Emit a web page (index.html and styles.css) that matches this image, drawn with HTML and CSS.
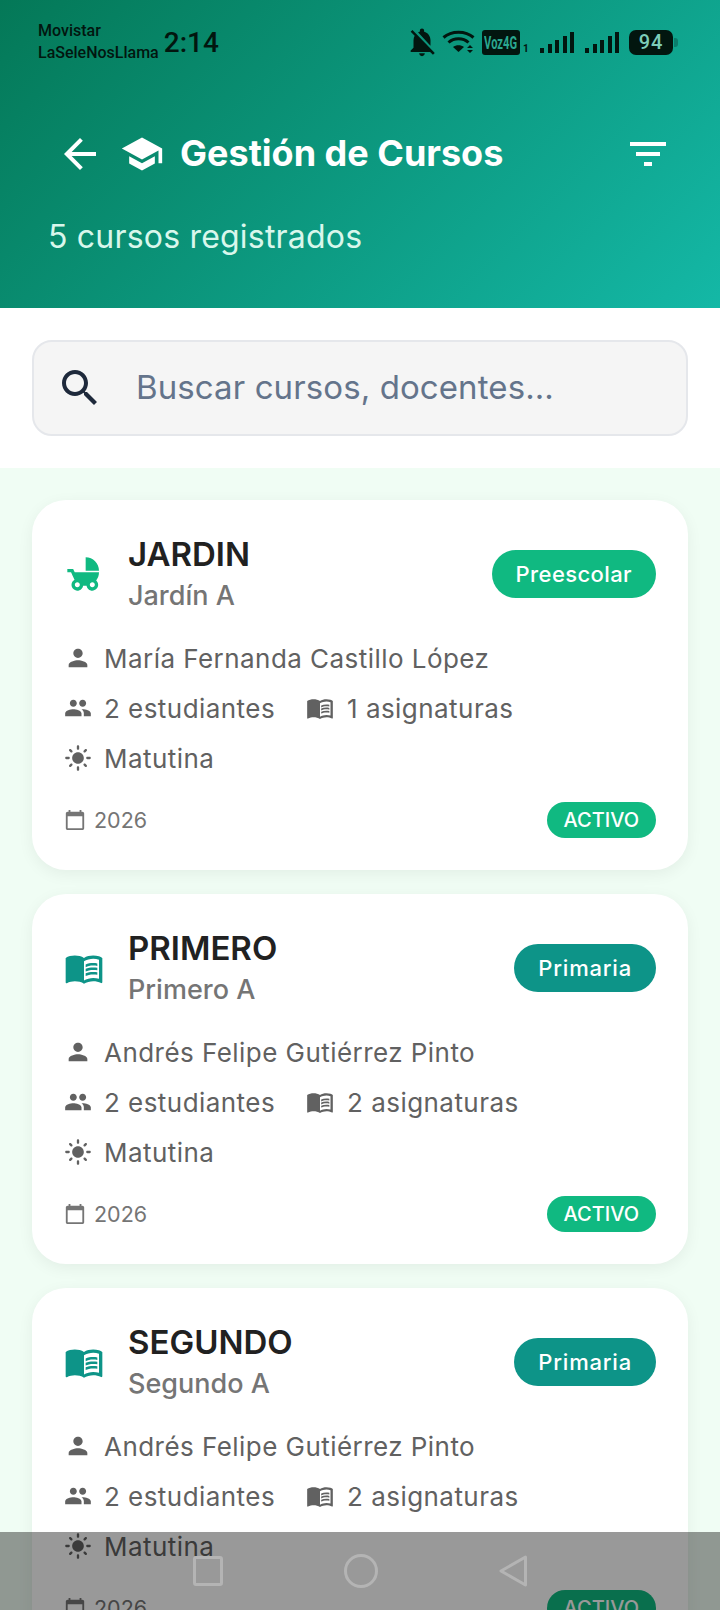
FILE: index.html
```html
<!DOCTYPE html>
<html lang="es">
<head>
  <meta charset="UTF-8" />
  <meta name="viewport" content="width=device-width, initial-scale=1" />
  <title>Gestión de Cursos</title>
  <link rel="stylesheet" href="styles.css">
</head>
<body>
  <svg class="sprite" width="0" height="0">
    <symbol id="i-back" viewBox="0 0 24 24"><path d="M20 11H7.83l5.59-5.59L12 4l-8 8 8 8 1.41-1.41L7.83 13H20v-2z"/></symbol>
    <symbol id="i-school" viewBox="0 0 24 24"><path d="M5 13.18v4L12 21l7-3.82v-4L12 17l-7-3.82zM12 3L1 9l11 6 9-4.91V17h2V9L12 3z"/></symbol>
    <symbol id="i-filter" viewBox="0 0 24 24"><path d="M10 18h4v-2h-4v2zM3 6v2h18V6H3zm3 7h12v-2H6v2z"/></symbol>
    <symbol id="i-search" viewBox="0 0 24 24"><path d="M15.5 14h-.79l-.28-.27C15.41 12.59 16 11.11 16 9.5 16 5.91 13.09 3 9.5 3S3 5.91 3 9.5 5.91 16 9.5 16c1.61 0 3.09-.59 4.23-1.57l.27.28v.79l5 4.99L20.49 19l-4.99-5zm-6 0C7.01 14 5 11.99 5 9.5S7.01 5 9.5 5 14 7.01 14 9.5 11.99 14 9.5 14z"/></symbol>
    <symbol id="i-stroller" viewBox="0 0 24 24"><path d="M13 2v8h8c0-4.42-3.58-8-8-8zm6.32 13.89C20.37 14.54 21 12.84 21 11H6.44l-.95-2H2v2h2.22s1.89 4.07 2.12 4.42c-1.1.59-1.84 1.75-1.84 3.08C4.5 20.43 6.07 22 8 22c1.76 0 3.22-1.3 3.46-3h2.08c.24 1.7 1.7 3 3.46 3 1.93 0 3.5-1.57 3.5-3.5 0-1.04-.46-1.97-1.18-2.61zM8 20c-.83 0-1.5-.67-1.5-1.5S7.17 17 8 17s1.5.67 1.5 1.5S8.83 20 8 20zm9 0c-.83 0-1.5-.67-1.5-1.5S16.17 17 17 17s1.5.67 1.5 1.5S17.83 20 17 20z"/></symbol>
    <symbol id="i-book" viewBox="0 0 24 24"><path d="M21 5c-1.11-.35-2.33-.5-3.5-.5-1.95 0-4.05.4-5.5 1.5-1.45-1.1-3.55-1.5-5.5-1.5S2.45 4.9 1 6v14.65c0 .25.25.5.5.5.1 0 .15-.05.25-.05C3.1 20.45 5.05 20 6.5 20c1.95 0 4.05.4 5.5 1.5 1.35-.85 3.8-1.5 5.5-1.5 1.65 0 3.35.3 4.75 1.05.1.05.15.05.25.05.25 0 .5-.25.5-.5V6c-.6-.45-1.25-.75-2-1zm0 13.5c-1.1-.35-2.3-.5-3.5-.5-1.7 0-4.15.65-5.5 1.5V8c1.35-.85 3.8-1.5 5.5-1.5 1.2 0 2.4.15 3.5.5v11.5z"/><path d="M17.5 10.5c.88 0 1.73.09 2.5.26V9.24c-.79-.15-1.64-.24-2.5-.24-1.7 0-3.24.29-4.5.83v1.66c1.13-.64 2.7-.99 4.5-.99zM13 12.49v1.66c1.13-.64 2.7-.99 4.5-.99.88 0 1.73.09 2.5.26V11.9c-.79-.15-1.64-.24-2.5-.24-1.7 0-3.24.3-4.5.83zM17.5 14.33c-1.7 0-3.24.29-4.5.83v1.66c1.13-.64 2.7-.99 4.5-.99.88 0 1.73.09 2.5.26v-1.52c-.79-.16-1.64-.24-2.5-.24z"/></symbol>
    <symbol id="i-person" viewBox="0 0 24 24"><path d="M12 12c2.21 0 4-1.79 4-4s-1.79-4-4-4-4 1.79-4 4 1.79 4 4 4zm0 2c-2.67 0-8 1.34-8 4v2h16v-2c0-2.66-5.33-4-8-4z"/></symbol>
    <symbol id="i-people" viewBox="0 0 24 24"><path d="M16 11c1.66 0 2.99-1.34 2.99-3S17.66 5 16 5c-1.66 0-3 1.34-3 3s1.34 3 3 3zm-8 0c1.66 0 2.99-1.34 2.99-3S9.66 5 8 5C6.34 5 5 6.34 5 8s1.34 3 3 3zm0 2c-2.33 0-7 1.17-7 3.5V19h14v-2.5c0-2.33-4.67-3.5-7-3.5zm8 0c-.29 0-.62.02-.97.05 1.16.84 1.97 1.97 1.97 3.45V19h6v-2.5c0-2.33-4.67-3.5-7-3.5z"/></symbol>
    <symbol id="i-sun" viewBox="0 0 24 24"><path d="M12 7c-2.76 0-5 2.24-5 5s2.24 5 5 5 5-2.24 5-5-2.24-5-5-5zM2 13h2c.55 0 1-.45 1-1s-.45-1-1-1H2c-.55 0-1 .45-1 1s.45 1 1 1zm18 0h2c.55 0 1-.45 1-1s-.45-1-1-1h-2c-.55 0-1 .45-1 1s.45 1 1 1zM11 2v2c0 .55.45 1 1 1s1-.45 1-1V2c0-.55-.45-1-1-1s-1 .45-1 1zm0 18v2c0 .55.45 1 1 1s1-.45 1-1v-2c0-.55-.45-1-1-1s-1 .45-1 1zM5.99 4.58c-.39-.39-1.03-.39-1.41 0-.39.39-.39 1.03 0 1.41l1.06 1.06c.39.39 1.03.39 1.41 0s.39-1.03 0-1.41L5.99 4.58zm12.37 12.37c-.39-.39-1.03-.39-1.41 0-.39.39-.39 1.03 0 1.41l1.06 1.06c.39.39 1.03.39 1.41 0 .39-.39.39-1.03 0-1.41l-1.06-1.06zm1.06-10.96c.39-.39.39-1.03 0-1.41-.39-.39-1.03-.39-1.41 0l-1.06 1.06c-.39.39-.39 1.03 0 1.41s1.03.39 1.41 0l1.06-1.06zM7.05 18.36c.39-.39.39-1.03 0-1.41-.39-.39-1.03-.39-1.41 0l-1.06 1.06c-.39.39-.39 1.03 0 1.41s1.03.39 1.41 0l1.06-1.06z"/></symbol>
    <symbol id="i-calendar" viewBox="0 0 24 24"><path d="M20 3h-1V1h-2v2H7V1H5v2H4c-1.1 0-2 .9-2 2v16c0 1.1.9 2 2 2h16c1.1 0 2-.9 2-2V5c0-1.1-.9-2-2-2zm0 18H4V8h16v13z"/></symbol>
    <symbol id="i-bell-off" viewBox="0 0 24 24"><path d="M20 18.69L7.84 6.14 5.27 3.49 4 4.76l2.8 2.8v.01c-.52.99-.8 2.16-.8 3.42v5l-2 2v1h13.73l2 2L21 19.72l-1-1.03zM12 22c1.11 0 2-.89 2-2h-4c0 1.11.89 2 2 2zm6-7.32V11c0-3.08-1.64-5.64-4.5-6.32V4c0-.83-.67-1.5-1.5-1.5s-1.5.67-1.5 1.5v.68c-.15.03-.29.08-.42.12-.1.03-.2.07-.3.11h-.01c-.2.08-.4.17-.59.27-.01 0-.01 0-.02.01L18 14.68z"/></symbol>
  </svg>

  <div class="screen">
    <header class="header">
      <div class="status-bar">
        <div class="carrier">Movistar<br>LaSeleNosLlama</div>
        <div class="clock">2:14</div>
        <div class="status-icons">
          <svg class="st-bell"><use href="#i-bell-off"/></svg>
          <svg class="st-wifi" viewBox="0 0 33 25">
            <path d="M1.5 7.5C9.5 .5 23.5 .5 31.5 7.5" fill="none" stroke="#02160f" stroke-width="3"/>
            <path d="M6.5 12.5C12 7.5 21 7.5 26.500 12.500" fill="none" stroke="#02160f" stroke-width="3"/>
            <path d="M11 17C14 14.500 19 14.500 22 17L16.500 22z"/>
            <path d="M25 18l3-3 3 3zM25 20l3 3 3-3z"/>
          </svg>
          <span class="chip-voz"><span>Voz4G</span></span>
          <span class="sim-num">1</span>
          <div class="signal"><i></i><i></i><i></i><i></i><i></i></div>
          <div class="signal"><i></i><i></i><i></i><i></i><i></i></div>
          <span class="battery">94</span>
          <span class="battery-nub"></span>
        </div>
      </div>
      <div class="toolbar">
        <svg class="ic-48"><use href="#i-back"/></svg>
        <svg class="ic-school"><use href="#i-school"/></svg>
        <h1>Gestión de Cursos</h1>
        <svg class="ic-48 ic-filter"><use href="#i-filter"/></svg>
      </div>
      <p class="subtitle">5 cursos registrados</p>
    </header>

    <section class="search-section">
      <div class="search-box">
        <svg class="ic-search"><use href="#i-search"/></svg>
        <span class="placeholder">Buscar cursos, docentes...</span>
      </div>
    </section>

    <main class="list">
      <article class="card">
        <div class="card-top">
          <svg class="ic-level green"><use href="#i-stroller"/></svg>
          <div class="names">
            <h2>JARDIN</h2>
            <div class="group">Jardín A</div>
          </div>
          <span class="pill pill-green">Preescolar</span>
        </div>
        <div class="row"><svg class="ic-28"><use href="#i-person"/></svg><span>María Fernanda Castillo López</span></div>
        <div class="row"><svg class="ic-28"><use href="#i-people"/></svg><span>2 estudiantes</span><svg class="ic-28 second"><use href="#i-book"/></svg><span>1 asignaturas</span></div>
        <div class="row"><svg class="ic-28"><use href="#i-sun"/></svg><span>Matutina</span></div>
        <div class="card-foot">
          <svg class="ic-22"><use href="#i-calendar"/></svg>
          <span class="year">2026</span>
          <span class="state">ACTIVO</span>
        </div>
      </article>

      <article class="card">
        <div class="card-top">
          <svg class="ic-level teal"><use href="#i-book"/></svg>
          <div class="names">
            <h2>PRIMERO</h2>
            <div class="group">Primero A</div>
          </div>
          <span class="pill pill-teal">Primaria</span>
        </div>
        <div class="row"><svg class="ic-28"><use href="#i-person"/></svg><span>Andrés Felipe Gutiérrez Pinto</span></div>
        <div class="row"><svg class="ic-28"><use href="#i-people"/></svg><span>2 estudiantes</span><svg class="ic-28 second"><use href="#i-book"/></svg><span>2 asignaturas</span></div>
        <div class="row"><svg class="ic-28"><use href="#i-sun"/></svg><span>Matutina</span></div>
        <div class="card-foot">
          <svg class="ic-22"><use href="#i-calendar"/></svg>
          <span class="year">2026</span>
          <span class="state">ACTIVO</span>
        </div>
      </article>

      <article class="card">
        <div class="card-top">
          <svg class="ic-level teal"><use href="#i-book"/></svg>
          <div class="names">
            <h2>SEGUNDO</h2>
            <div class="group">Segundo A</div>
          </div>
          <span class="pill pill-teal">Primaria</span>
        </div>
        <div class="row"><svg class="ic-28"><use href="#i-person"/></svg><span>Andrés Felipe Gutiérrez Pinto</span></div>
        <div class="row"><svg class="ic-28"><use href="#i-people"/></svg><span>2 estudiantes</span><svg class="ic-28 second"><use href="#i-book"/></svg><span>2 asignaturas</span></div>
        <div class="row"><svg class="ic-28"><use href="#i-sun"/></svg><span>Matutina</span></div>
        <div class="card-foot">
          <svg class="ic-22"><use href="#i-calendar"/></svg>
          <span class="year">2026</span>
          <span class="state">ACTIVO</span>
        </div>
      </article>
    </main>

    <div class="nav-bar">
      <span class="nav-square"></span>
      <span class="nav-circle"></span>
      <svg class="nav-back" viewBox="0 0 28 32"><path d="M26.500 2L2 16l24.500 14z" fill="none" stroke="#b4b4b4" stroke-width="3" stroke-linejoin="round"/></svg>
    </div>
  </div>
</body>
</html>
```

FILE: styles.css
```css
:root {
  --green: #10b981;
  --teal: #0d9488;
  --text-dark: #212121;
  --text-mid: #616161;
  --text-soft: #757575;
  --status: #02160f;
}
* {
  box-sizing: border-box;
}
html, body {
  margin: 0;
  height: 1610px;
  overflow: hidden;
}
body {
  font-family: "Inter", "Noto Sans", sans-serif;
  background: #f0fdf4;
}
svg {
  fill: currentColor;
  flex: none;
}
.sprite {
  position: absolute;
}
.screen {
  position: relative;
  height: 1610px;
  overflow: hidden;
}

/* header */
.header {
  height: 308px;
  background: linear-gradient(135deg, #047857, #14b8a6);
  color: #fff;
}
.status-bar {
  height: 84px;
  display: flex;
  align-items: center;
  padding: 0 42px 0 38px;
  color: var(--status);
  font-family: "Roboto", sans-serif;
}
.carrier {
  font-size: 16px;
  font-weight: 500;
  line-height: 22px;
}
.clock {
  font-size: 28px;
  font-weight: 500;
  margin-left: 5px;
}
.status-icons {
  margin-left: auto;
  display: flex;
  align-items: center;
}
.st-bell {
  width: 34px;
  height: 34px;
}
.st-wifi {
  width: 33px;
  height: 25px;
  margin-left: 3px;
}
.chip-voz {
  width: 38px;
  height: 25px;
  margin-left: 7px;
  border-radius: 3px;
  background: var(--status);
  color: #2aa890;
  font-size: 18px;
  font-weight: 700;
  line-height: 25px;
  text-align: center;
  overflow: hidden;
}
.chip-voz span {
  display: inline-block;
  margin: 0 -10px;
  transform: scaleX(0.62);
}
.sim-num {
  width: 5px;
  margin: 12px 0 0 3px;
  font-size: 10px;
  font-weight: 700;
}
.signal {
  display: flex;
  align-items: flex-end;
  gap: 3.5px;
  height: 21px;
  margin-left: 12px;
}
.signal + .signal {
  margin-left: 11px;
}
.signal i {
  width: 4px;
  background: var(--status);
}
.signal i:nth-child(1) { height: 5px; }
.signal i:nth-child(2) { height: 9px; }
.signal i:nth-child(3) { height: 13px; }
.signal i:nth-child(4) { height: 17px; }
.signal i:nth-child(5) { height: 21px; }
.battery {
  width: 44px;
  height: 25px;
  margin-left: 10px;
  border-radius: 7px;
  background: var(--status);
  color: #7ccdb9;
  font-size: 20px;
  font-weight: 500;
  line-height: 25px;
  text-align: center;
  letter-spacing: 1px;
}
.battery-nub {
  width: 4px;
  height: 9px;
  margin-left: 1px;
  border-radius: 0 3px 3px 0;
  background: #0b7d6c;
}
.toolbar {
  height: 48px;
  margin-top: 46px;
  padding-left: 56px;
  display: flex;
  align-items: center;
}
.ic-48 {
  width: 48px;
  height: 48px;
}
.ic-school {
  width: 44px;
  height: 44px;
  margin-left: 16px;
}
.ic-filter {
  margin-left: auto;
  margin-right: 48px;
}
h1 {
  margin: 0 0 0 16px;
  font-size: 36px;
  font-weight: 700;
  line-height: 46px;
  padding-bottom: 2px;
}
.subtitle {
  margin: 39px 0 0 48px;
  color: #d9f7ec;
  font-size: 32px;
  line-height: 40px;
  letter-spacing: 0.2px;
}

/* search */
.search-section {
  height: 160px;
  padding: 32px;
  background: #fff;
}
.search-box {
  height: 96px;
  padding-left: 22px;
  display: flex;
  align-items: center;
  gap: 32px;
  background: #f5f5f5;
  border: 2px solid #e5e7eb;
  border-radius: 20px;
}
.ic-search {
  width: 48px;
  height: 48px;
  color: #1e293b;
}
.placeholder {
  padding-bottom: 3px;
  color: #64748b;
  font-size: 33px;
  letter-spacing: 0.1px;
}

/* cards */
.list {
  padding: 32px;
  display: flex;
  flex-direction: column;
  gap: 24px;
}
.card {
  height: 370px;
  padding: 32px;
  background: #fff;
  border-radius: 34px;
  box-shadow: 0 4px 16px rgba(0, 0, 0, 0.06);
}
.card-top {
  display: flex;
  align-items: center;
  margin-bottom: 16px;
}
.ic-level {
  width: 40px;
  height: 40px;
  margin-bottom: 1px;
}
.green { color: var(--green); }
.teal { color: var(--teal); }
.names {
  margin-left: 24px;
  padding-top: 2px;
}
h2 {
  margin: 0;
  color: var(--text-dark);
  font-size: 33px;
  font-weight: 600;
  line-height: 41px;
}
.group {
  color: var(--text-soft);
  font-size: 27px;
  font-weight: 500;
  line-height: 42px;
}
.pill {
  margin: 0 0 1px auto;
  height: 48px;
  padding: 0 24px;
  border-radius: 24px;
  color: #fff;
  font-size: 22px;
  font-weight: 500;
  line-height: 48px;
  letter-spacing: 0.4px;
}
.pill-green { background: var(--green); }
.pill-teal {
  background: var(--teal);
  letter-spacing: 0.8px;
}
.row {
  height: 50px;
  display: flex;
  align-items: center;
  color: var(--text-mid);
  font-size: 26px;
  letter-spacing: 0.45px;
}
.ic-28 {
  width: 28px;
  height: 28px;
  margin-right: 12px;
}
.second {
  margin-left: 31px;
  margin-right: 13px;
}
.card-foot {
  display: flex;
  align-items: center;
  margin-top: 19px;
  color: var(--text-soft);
}
.ic-22 {
  width: 22px;
  height: 22px;
  margin-right: 8px;
}
.year {
  font-size: 21.5px;
}
.state {
  margin-left: auto;
  height: 36px;
  padding: 0 17px;
  border-radius: 18px;
  background: var(--green);
  color: #fff;
  font-size: 20px;
  font-weight: 500;
  line-height: 36px;
}

/* android nav overlay */
.nav-bar {
  position: absolute;
  left: 0;
  right: 0;
  bottom: 0;
  height: 78px;
  display: flex;
  align-items: center;
  justify-content: center;
  gap: 121px;
  background: rgba(0, 0, 0, 0.4);
}
.nav-square {
  width: 30px;
  height: 30px;
  border: 3px solid #b4b4b4;
  border-radius: 3px;
}
.nav-circle {
  width: 34px;
  height: 34px;
  border: 3px solid #b4b4b4;
  border-radius: 50%;
}
.nav-back {
  width: 28px;
  height: 32px;
}
```
